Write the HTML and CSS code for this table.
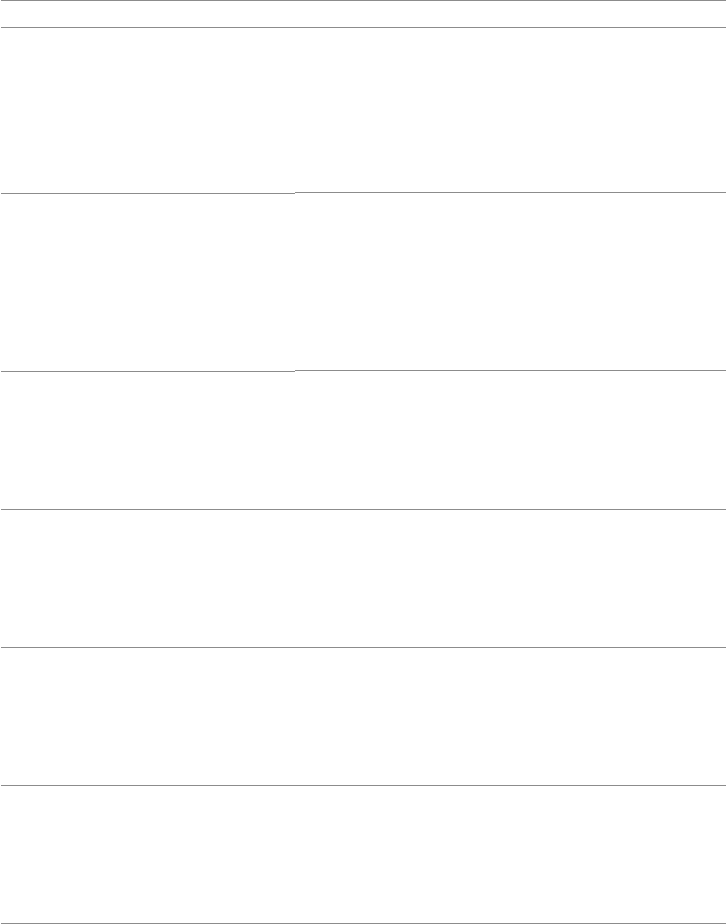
FILE: index.html
```html
<!DOCTYPE html>
<html>
<head>
<meta charset="utf-8">
<link rel="stylesheet" href="styles.css">
</head>
<body>
<div class="page">
  <div class="head"></div>
  <div class="row row-a">
    <div class="cell-l"></div>
    <div class="cell-r"></div>
  </div>
  <div class="row row-b">
    <div class="cell-l"></div>
    <div class="cell-r"></div>
  </div>
  <div class="band"></div>
  <div class="band"></div>
  <div class="band"></div>
  <div class="band"></div>
</div>
</body>
</html>
```
FILE: styles.css
```css
html, body {
  margin: 0;
  padding: 0;
  background: #ffffff;
  font-family: "Liberation Sans", Arial, sans-serif;
}
.page {
  padding-left: 1px;
  display: flex;
  flex-direction: column;
}
.head {
  height: 26px;
  border-top: 1px solid #8c8c8c;
  border-bottom: 1px solid #8c8c8c;
  position: relative;
}
.row {
  display: flex;
  align-items: flex-start;
}
.cell-l {
  width: 294px;
  border-bottom: 1px solid #8c8c8c;
}
.cell-r {
  flex: 1;
  border-bottom: 1px solid #8c8c8c;
}
.row-a .cell-l { height: 165px; }
.row-a .cell-r { height: 164px; }
.row-b .cell-l { height: 177px; }
.row-b .cell-r { height: 176px; }
.band {
  height: 137px;
  border-bottom: 1px solid #8c8c8c;
}
```
